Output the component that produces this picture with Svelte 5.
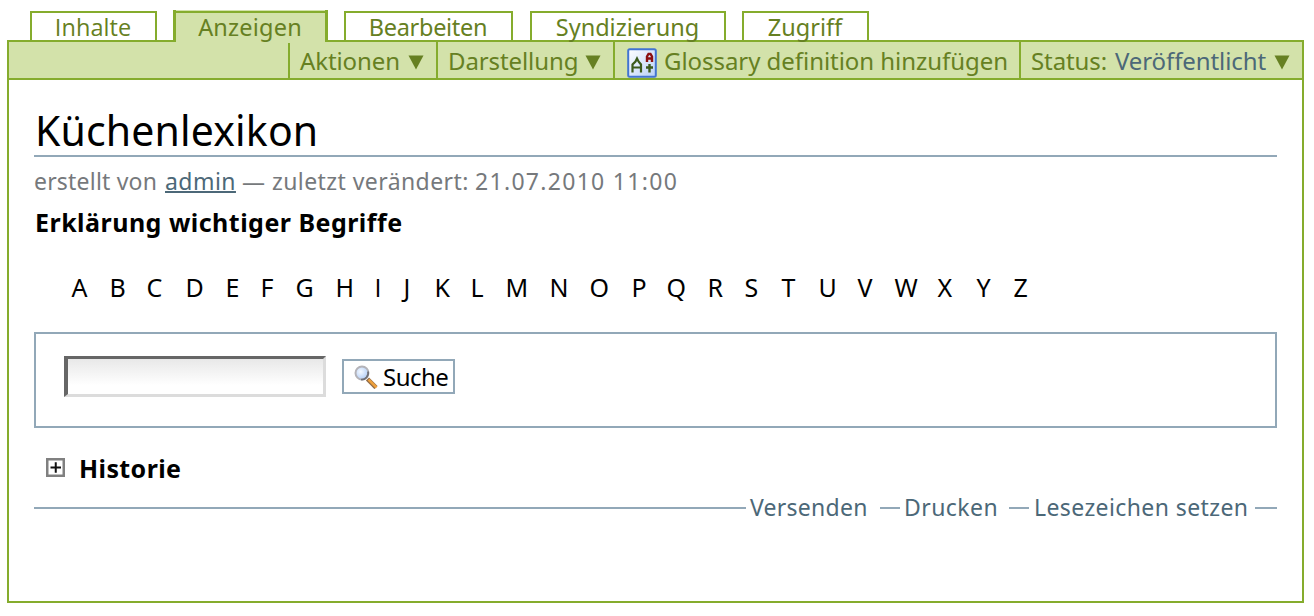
<script>
  const tabs = [
    { label: 'Inhalte', width: 127, gap: 16, spacing: 0.05, plain: true },
    { label: 'Anzeigen', width: 155, gap: 16, spacing: 0.2, active: true },
    { label: 'Bearbeiten', width: 169, gap: 17, spacing: -0.3 },
    { label: 'Syndizierung', width: 196, gap: 16, spacing: 0 },
    { label: 'Zugriff', width: 127, gap: 0, spacing: 0 }
  ];

  // letter and the width of its cell
  const letters = [
    ['A', 38], ['B', 37], ['C', 39], ['D', 40], ['E', 35], ['F', 35], ['G', 40],
    ['H', 39], ['I', 29], ['J', 31], ['K', 36], ['L', 35], ['M', 44], ['N', 40],
    ['O', 42], ['P', 35], ['Q', 41], ['R', 37], ['S', 37], ['T', 37], ['U', 39],
    ['V', 37], ['W', 43], ['X', 39], ['Y', 37], ['Z', 30]
  ];
</script>

{#snippet arrow()}
  <svg class="arrow" width="16" height="15" viewBox="0 0 16 15"><path d="M.5 .5h15L8 14.6z" fill="#668022" /></svg>
{/snippet}

<div class="page">
  <nav class="tabs">
    {#each tabs as t}
      <a class="tab" class:active={t.active} class:plain={t.plain}
        style="width:{t.width}px;margin-right:{t.gap}px;letter-spacing:{t.spacing}px"><span>{t.label}</span></a>
    {/each}
  </nav>

  <section class="box">
    <div class="bar">
      <div class="action actions"><span>Aktionen</span>{@render arrow()}</div>
      <div class="action display"><span>Darstellung</span>{@render arrow()}</div>
      <div class="action add">
        <svg width="30" height="30" viewBox="0 0 30 30">
          <defs>
            <linearGradient id="tile" x1="0" y1="0" x2="1" y2="1">
              <stop offset="0" stop-color="#fff" /><stop offset="1" stop-color="#b8d0f8" />
            </linearGradient>
          </defs>
          <rect x="1.2" y="1.2" width="27.6" height="27.6" rx="1.5" fill="url(#tile)" stroke="#4274d2" stroke-width="2" />
          <path d="M5.500 24.500v-8l3-3 1.500-3 1.500 3 2.500 3v8M5.500 19.500h8.500" fill="none" stroke="#3c5a1c" stroke-width="2.200" />
          <path d="M20 14V8.500l1.500-2.500h2L25 8.500V14M20 10.500h5" fill="none" stroke="#8c1010" stroke-width="2.400" />
          <path d="M22.500 16v8.500M19 19.500h7" fill="none" stroke="#3c5a1c" stroke-width="2.400" />
        </svg>
        <span>Glossary definition hinzufügen</span>
      </div>
      <div class="action status"><span>Status:</span><b>Veröffentlicht</b>{@render arrow()}</div>
    </div>

    <main>
      <h1>Küchenlexikon</h1>
      <p class="byline"><span class="by">erstellt von</span><a>admin</a><span class="dash">—</span><span class="changed">zuletzt verändert:</span><span class="date">21.07.2010 11:00</span></p>
      <p class="lead">Erklärung wichtiger Begriffe</p>

      <div class="letters">
        {#each letters as [l, w]}<span class:plain={l === 'I'} style="width:{w}px">{l}</span>{/each}
      </div>

      <form class="search">
        <input type="text" aria-label="Suche" />
        <button type="button">
          <svg width="24" height="24" viewBox="0 0 24 24">
            <defs>
              <radialGradient id="lens" cx=".4" cy=".4" r=".7">
                <stop offset="0" stop-color="#f4f9ff" /><stop offset="1" stop-color="#aac8f6" />
              </radialGradient>
            </defs>
            <path d="M13.500 14l8.500 8.500" stroke="#8e6a48" stroke-width="4.500" />
            <path d="M14.500 14.500l8 8" stroke="#eda03c" stroke-width="2.500" />
            <circle cx="8" cy="8" r="6.500" fill="url(#lens)" stroke="#b4b3b8" stroke-width="2" />
            <path d="M14 6.500a6.500 6.500 0 0 1-7 8" fill="none" stroke="#707078" stroke-width="1.700" />
          </svg>
          <span>Suche</span>
        </button>
      </form>

      <h2>
        <svg width="19" height="19" viewBox="0 0 19 19">
          <rect x="1.250" y="1.250" width="16.500" height="16.500" fill="#fff" stroke="#808080" stroke-width="2.500" />
          <path d="M4.500 9.500h10.500M9.750 4.250v10.500" stroke="#111" stroke-width="2" />
        </svg>
        <span>Historie</span>
      </h2>

      <div class="links">
        <i class="rule"></i><a class="send">Versenden</a>
        <i class="short"></i><a class="print">Drucken</a>
        <i class="short"></i><a class="mark">Lesezeichen setzen</a>
        <i class="end"></i>
      </div>
    </main>
  </section>
</div>

<style>
  :global(body) { background: #fff; }
  .page {
    box-sizing: border-box;
    height: 616px;
    padding: 10px 10px 0 7px;
    font-family: "Noto Sans", sans-serif;
    color: #000;
    overflow: hidden;
    white-space: nowrap;
  }
  .plain { font-family: "Open Sans", sans-serif; }
  .tabs { display: flex; height: 31px; padding-left: 22.500px; align-items: flex-end; }
  .tab {
    box-sizing: border-box;
    flex: none;
    height: 30px;
    border: 2px solid #85ac2d;
    border-bottom: 0;
    text-align: center;
    font-size: 23.500px;
    line-height: 29px;
    color: #668022;
  }
  .tab span { position: relative; z-index: 1; }
  .tab.active {
    position: relative;
    height: 32px;
    margin-bottom: -1px;
    background: linear-gradient(#85ac2d, #85ac2d) 0 1px / 100% 2px no-repeat #d3e2aa;
    border-top: 0;
    border-left-width: 3px;
    border-right-width: 3px;
    line-height: 35px;
  }
  .tab.active::after {
    content: "";
    position: absolute;
    left: 0; right: 0; bottom: -1px;
    height: 2px;
    background: #d3e2aa;
  }
  .box { box-sizing: border-box; height: 563px; margin-top: -1px; border: 2px solid #85ac2d; }
  .bar {
    display: flex;
    justify-content: flex-end;
    height: 36px;
    border-bottom: 2px solid #85ac2d;
    background: #d3e2aa;
    color: #668022;
    font-size: 24px;
    line-height: 37px;
  }
  .action { box-sizing: border-box; display: flex; align-items: center; border-left: 2px solid #85ac2d; }
  .action span, .action b { margin-top: 1px; }
  .arrow { flex: none; margin-top: 4px; }
  .actions { width: 148px; padding-left: 10px; }
  .actions span { width: 108px; letter-spacing: -.1px; }
  .display { width: 177px; padding-left: 10px; }
  .display span { width: 137px; letter-spacing: -.1px; }
  .add { width: 406px; padding-left: 12px; }
  .add svg { flex: none; margin: 5px 7px 0 0; }
  .add span { letter-spacing: -.05px; }
  .status { width: 283px; padding-left: 10px; }
  .status span { width: 84px; letter-spacing: -.1px; }
  .status b { width: 159px; font-weight: 400; letter-spacing: -.1px; color: #4c6878; }

  main { padding: 0 25px; }
  h1, h2, p { margin: 0; }
  h1 {
    height: 73px;
    padding: 2px 0 0 1px;
    border-bottom: 2px solid #92a8b8;
    font-size: 41px;
    font-weight: 400;
    line-height: 96px;
    letter-spacing: .15px;
  }
  .byline { display: flex; height: 48px; font-size: 23px; line-height: 48px; color: #76797c; }
  .byline .by { width: 131px; letter-spacing: .2px; }
  .byline a {
    width: 71px;
    letter-spacing: .45px;
    color: #4c6878;
    text-decoration: underline;
    text-decoration-thickness: 2px;
    text-underline-offset: 1px;
    text-decoration-skip-ink: none;
  }
  .byline .dash { width: 36px; text-indent: 6px; }
  .byline .changed { width: 203px; letter-spacing: .42px; }
  .byline .date { letter-spacing: 1.300px; }
  .lead { height: 36px; padding-left: 1px; font-size: 25px; font-weight: 700; line-height: 34px; letter-spacing: .48px; }
  .letters { display: flex; margin-top: 29px; padding-left: 37.500px; font-size: 25px; line-height: 34px; height: 36px; }
  .letters span { flex: none; }
  .search {
    box-sizing: border-box;
    display: flex;
    align-items: flex-start;
    gap: 16px;
    height: 96px;
    margin: 26px 0 0;
    padding: 22px 0 0 28px;
    border: 2px solid #92a8b8;
  }
  input {
    box-sizing: border-box;
    width: 262px;
    height: 41px;
    padding: 0 6px;
    border: 3px solid;
    border-color: #666 #dcdcdc #dcdcdc #666;
    border-left-width: 4px;
    background: linear-gradient(#e8e8e8, #fff 75%);
    font: 24px "Noto Sans", sans-serif;
  }
  button {
    box-sizing: border-box;
    display: flex;
    align-items: center;
    width: 113px;
    height: 35px;
    margin-top: 3px;
    padding: 0 0 0 10px;
    border: 2px solid #92a8b8;
    background: #fff;
    font: 24px/34px "Noto Sans", sans-serif;
    letter-spacing: -.5px;
    color: #000;
  }
  button svg { flex: none; margin-right: 5px; }
  h2 { display: flex; align-items: center; height: 36px; margin-top: 22px; padding-left: 12px; font-size: 25px; line-height: 36px; letter-spacing: .4px; }
  h2 svg { margin: -1px 14px 0 0; }
  .links { display: flex; align-items: center; height: 36px; margin-top: 3px; font-size: 23px; line-height: 36px; color: #4c6878; }
  .links i { flex: none; height: 2px; margin-top: 1px; background: #92a8b8; }
  .links a { box-sizing: border-box; flex: none; }
  .rule { width: 712px; }
  .short { width: 20px; }
  .end { width: 22px; }
  .send { width: 134px; padding-left: 4px; letter-spacing: .25px; }
  .print { width: 109px; padding-left: 4px; letter-spacing: .45px; }
  .mark { width: 226px; padding-left: 5px; letter-spacing: .4px; }
</style>
